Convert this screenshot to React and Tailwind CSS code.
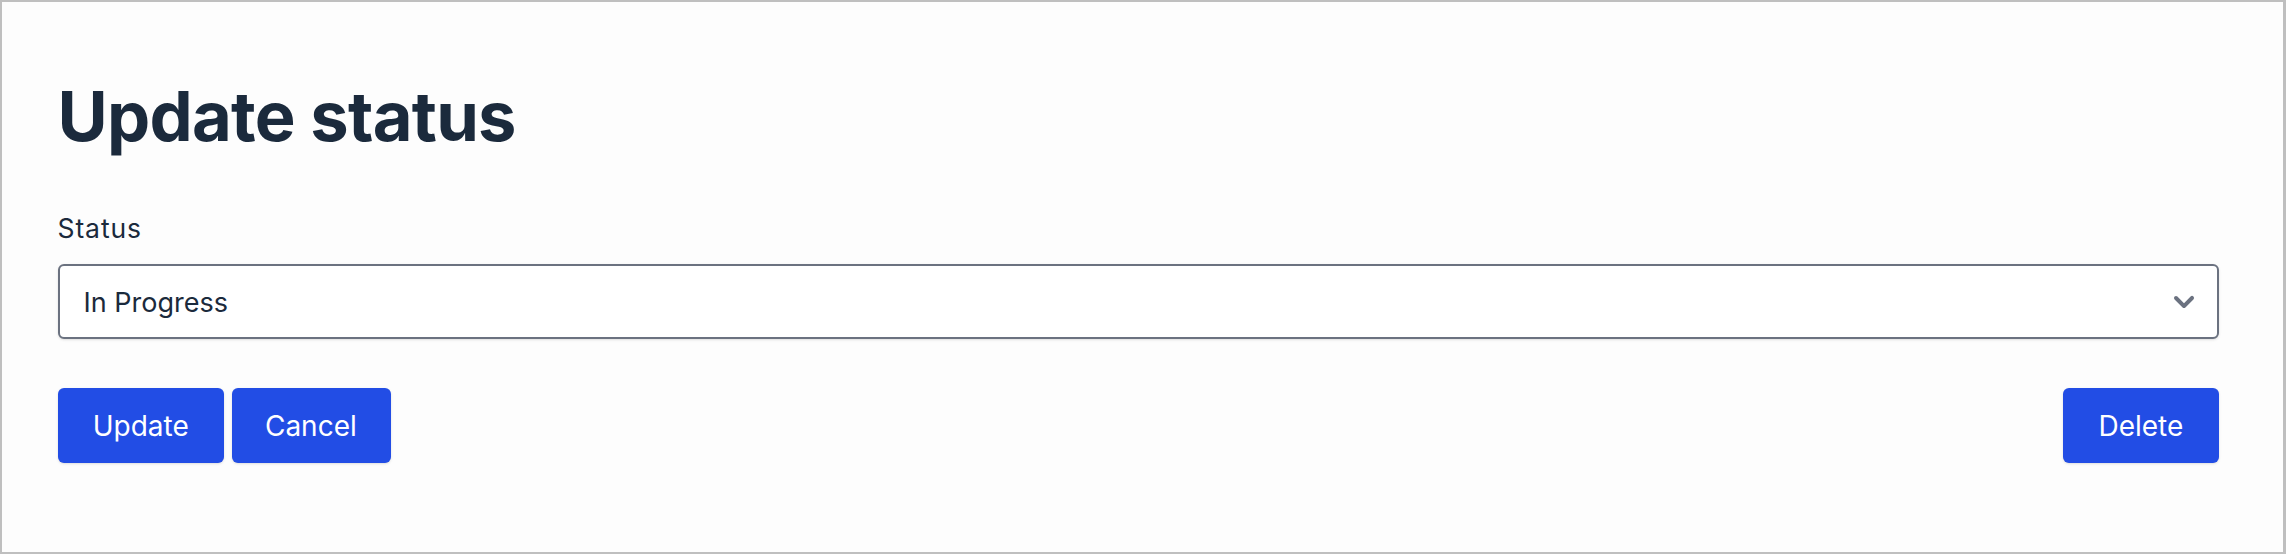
import React from "react";

const font = { fontFamily: "Inter, 'Noto Sans', sans-serif" };

function Chevron() {
  return (
    <svg width="40" height="40" viewBox="0 0 20 20" fill="#6b7280" aria-hidden="true">
      <path
        fillRule="evenodd"
        clipRule="evenodd"
        d="M5.293 7.293a1 1 0 011.414 0L10 10.586l3.293-3.293a1 1 0 111.414 1.414l-4 4a1 1 0 01-1.414 0l-4-4a1 1 0 010-1.414z"
      />
    </svg>
  );
}

function Btn({ children, px = "px-[35.2px]" }) {
  return (
    <button className={`h-[75px] ${px} bg-[#224de5] text-white text-[28px] leading-[40px] rounded-[6px] shadow-sm`}>
      {children}
    </button>
  );
}

export default function App() {
  return (
    <div
      className="w-[2286px] h-[554px] box-border border-t-2 border-l-2 border-b-2 border-r-[3px] border-[#bfbfbf] bg-[#fdfdfd] pl-[55.5px] pr-[64.5px] pt-[80.5px] flex flex-col text-[#1b2a3c]"
      style={font}
    >
      <h1 className="text-[68.6px] leading-[68.6px] font-bold tracking-[-0.75px] m-0">Update status</h1>
      <label className="mt-[57px] text-[26.5px] leading-[40px] font-normal tracking-[0.9px]">Status</label>
      <div className="mt-[16px] h-[75px] box-border border-2 border-[#6b7280] rounded-[6px] bg-white shadow-sm flex items-center justify-between pl-[24px] pr-[13px]">
        <span className="text-[27px] leading-[40px] pt-[3px]">In Progress</span>
        <Chevron />
      </div>
      <div className="mt-[49px] flex justify-between">
        <div className="flex gap-[8px]">
          <Btn>Update</Btn>
          <Btn px="pl-[33px] pr-[34px]">Cancel</Btn>
        </div>
        <Btn>Delete</Btn>
      </div>
    </div>
  );
}
